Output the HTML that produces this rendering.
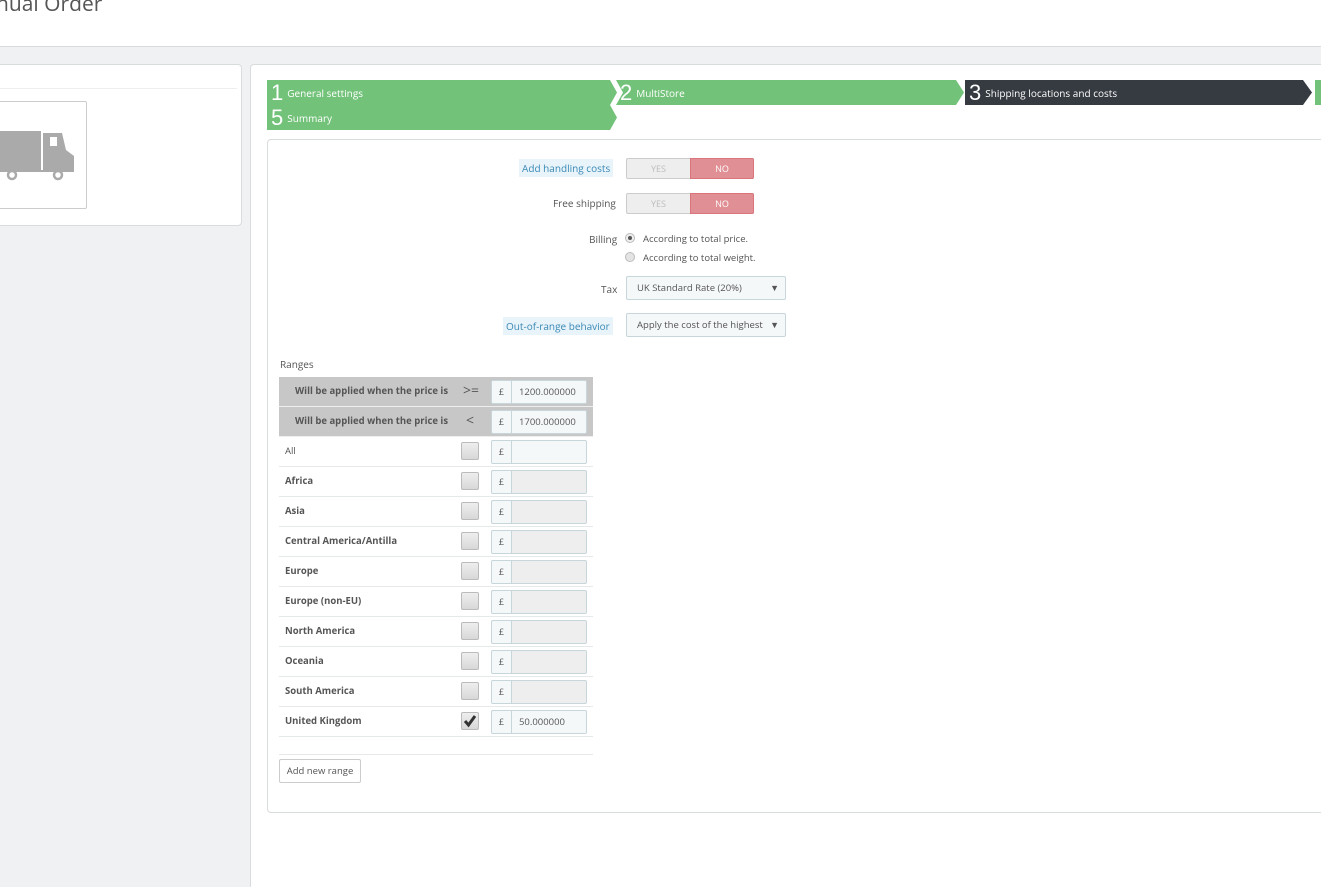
<!DOCTYPE html>
<html style="width:1321px;height:887px;overflow:hidden"><head><meta charset="utf-8"><style>
*{box-sizing:border-box;margin:0;padding:0}
body{width:1321px;height:887px;overflow:hidden;background:#eff1f2;font-family:"Open Sans","Liberation Sans",sans-serif;position:relative;font-size:10px;color:#555}
.a{position:absolute}
.step{position:absolute;height:25px;color:#fff;font-size:10px;line-height:26px;white-space:nowrap}
.step b{font-weight:normal;font-size:22px;vertical-align:-3px;margin:0 4px 0 4px;font-family:"Liberation Sans",sans-serif}
.lbl{position:absolute;font-size:10px;color:#555;text-align:right}
.sw{position:absolute;width:128px;height:21px;border:1px solid #ccc;border-radius:2px;background:#eee}
.sw .y{position:absolute;left:0;width:63px;top:0;height:19px;color:#bbb;text-align:center;line-height:19px;font-size:9px}
.sw .n{position:absolute;left:63px;top:-1px;width:64px;height:21px;background:#e08f95;border:1px solid #d9747b;color:#fff;text-align:center;line-height:19px;font-size:9px;border-radius:0 2px 2px 0}
.sel{position:absolute;left:626px;width:160px;height:24px;border:1px solid #c7d6db;background:#f5f8f9;border-radius:2px;font-size:9.5px;line-height:22px;padding-left:10px;color:#555}
.sel:after{content:"▼";position:absolute;right:6px;top:0;font-size:9px}
.row{position:absolute;left:279px;width:314px;height:30px;border-bottom:1px solid #e6e9ea;font-size:9.5px}
.row .t{position:absolute;left:6px;top:7px;font-weight:bold;color:#555}
.cb{position:absolute;left:182px;top:5px;width:18px;height:18px;border:1px solid #bbb;border-radius:2px;background:linear-gradient(#eee,#d8d8d8)}
.cur{position:absolute;left:212px;top:3px;width:21px;height:24px;border:1px solid #c7d6db;background:#f5f8f9;text-align:center;line-height:22px;font-size:9px;border-radius:2px 0 0 2px}
.inp{position:absolute;left:232px;top:3px;width:76px;height:24px;border:1px solid #c7d6db;background:#eee;border-radius:0 2px 2px 0;line-height:22px;padding-left:7px;font-size:9.5px}
.hr{background:#c7c7c7;border-bottom:1px solid #eee}
.hr .t{left:16px;color:#555}
.hr .op{position:absolute;left:184px;top:4px;font-size:14px;color:#555}
.hr .inp{background:#f5f8f9}
</style></head><body>
<div class="a" style="left:0;top:0;width:1321px;height:47px;background:#fff;border-bottom:1px solid #d9dcdd"></div>
<div class="a" style="left:-4px;top:-10px;font-size:21px;color:#555">nual Order</div>

<div class="a" style="left:-5px;top:64px;width:247px;height:162px;background:#fff;border:1px solid #d9dcdd;border-radius:4px"></div>
<div class="a" style="left:0;top:88px;width:237px;height:1px;background:#eee"></div>
<div class="a" style="left:-5px;top:101px;width:92px;height:108px;background:#fff;border:1px solid #ccc;border-radius:2px"></div>
<svg class="a" style="left:0;top:125px" width="80" height="60" viewBox="0 125 80 60">
<rect x="0" y="131" width="41" height="39" fill="#aaa"/>
<path d="M43 133 H62 L66 150 L74 156 V170 H43 Z" fill="#aaa"/>
<rect x="50" y="137" width="7" height="9" fill="#fff"/>
<rect x="0" y="170" width="74" height="2" fill="#aaa"/>
<circle cx="12" cy="175" r="4" fill="#fff" stroke="#aaa" stroke-width="2.5"/>
<circle cx="58" cy="175" r="4" fill="#fff" stroke="#aaa" stroke-width="2.5"/>
</svg>

<div class="a" style="left:250px;top:64px;width:1071px;height:823px;background:#fff;border-left:1px solid #d9dcdd;border-top:1px solid #d9dcdd;border-radius:4px 0 0 0"></div>

<svg class="a" style="left:267px;top:80px" width="1054" height="51">
<polygon points="0,0 343,0 350,12.5 343,25 350,37.5 343,50 0,50" fill="#72c279"/>
<polygon points="349,0 689,0 697,12.5 689,25 349,25 356,12.5" fill="#72c279"/>
<polygon points="698,0 1036,0 1045,12.5 1036,25 698,25" fill="#363a41"/>
<polygon points="1048,0 1054,0 1054,25 1048,25" fill="#72c279"/>
</svg>
<div class="step" style="left:267px;top:80px"><b>1</b>General settings</div>
<div class="step" style="left:267px;top:105px"><b>5</b>Summary</div>
<div class="step" style="left:616px;top:80px"><b>2</b>MultiStore</div>
<div class="step" style="left:965px;top:80px"><b>3</b>Shipping locations and costs</div>

<div class="a" style="left:267px;top:139px;width:1070px;height:674px;border:1px solid #d9dcdd;border-radius:4px"></div>

<div class="lbl" style="left:519px;top:159px;background:#e8f3fa;color:#3a89b5;padding:2px 3px">Add handling costs</div>
<div class="sw" style="left:626px;top:158px"><div class="y">YES</div><div class="n">NO</div></div>
<div class="lbl" style="left:553px;top:196px">Free shipping</div>
<div class="sw" style="left:626px;top:193px"><div class="y">YES</div><div class="n">NO</div></div>
<div class="lbl" style="left:589px;top:232px">Billing</div>
<div class="a" style="left:625px;top:233px;width:10px;height:10px;border-radius:50%;border:1px solid #bbb;background:#eee"><div style="margin:2px;width:4px;height:4px;border-radius:50%;background:#555"></div></div>
<div class="a" style="left:643px;top:232px;font-size:9.5px">According to total price.</div>
<div class="a" style="left:625px;top:252px;width:10px;height:10px;border-radius:50%;border:1px solid #bbb;background:#e4e4e4"></div>
<div class="a" style="left:643px;top:251px;font-size:9.5px">According to total weight.</div>
<div class="lbl" style="left:601px;top:282px">Tax</div>
<div class="sel" style="top:276px">UK Standard Rate (20%)</div>
<div class="lbl" style="left:503px;top:317px;background:#e8f3fa;color:#3a89b5;padding:2px 3px">Out-of-range behavior</div>
<div class="sel" style="top:313px;overflow:hidden;white-space:nowrap;padding-right:20px">Apply the cost of the highest</div>

<div class="a" style="left:280px;top:357px;font-size:10px">Ranges</div>
<div class="row hr" style="top:377px"><div class="t">Will be applied when the price is</div><div class="op">&gt;=</div><div class="cur">£</div><div class="inp">1200.000000</div></div>
<div class="row hr" style="top:407px"><div class="t">Will be applied when the price is</div><div class="op" style="left:187px">&lt;</div><div class="cur">£</div><div class="inp">1700.000000</div></div>
<div class="row" style="top:437px"><div class="t" style="font-weight:normal">All</div><div class="cb"></div><div class="cur">£</div><div class="inp" style="background:#f5f8f9"></div></div>
<div class="row" style="top:467px"><div class="t">Africa</div><div class="cb"></div><div class="cur">£</div><div class="inp"></div></div>
<div class="row" style="top:497px"><div class="t">Asia</div><div class="cb"></div><div class="cur">£</div><div class="inp"></div></div>
<div class="row" style="top:527px"><div class="t">Central America/Antilla</div><div class="cb"></div><div class="cur">£</div><div class="inp"></div></div>
<div class="row" style="top:557px"><div class="t">Europe</div><div class="cb"></div><div class="cur">£</div><div class="inp"></div></div>
<div class="row" style="top:587px"><div class="t">Europe (non-EU)</div><div class="cb"></div><div class="cur">£</div><div class="inp"></div></div>
<div class="row" style="top:617px"><div class="t">North America</div><div class="cb"></div><div class="cur">£</div><div class="inp"></div></div>
<div class="row" style="top:647px"><div class="t">Oceania</div><div class="cb"></div><div class="cur">£</div><div class="inp"></div></div>
<div class="row" style="top:677px"><div class="t">South America</div><div class="cb"></div><div class="cur">£</div><div class="inp"></div></div>
<div class="row" style="top:707px"><div class="t">United Kingdom</div><div class="cb"><svg width="16" height="16" viewBox="0 0 16 16"><path d="M3 8 L6.5 12 L13 3" fill="none" stroke="#333" stroke-width="3"/></svg></div><div class="cur">£</div><div class="inp" style="background:#f5f8f9">50.000000</div></div>
<div class="a" style="left:279px;top:754px;width:314px;height:1px;background:#e6e9ea"></div>
<div class="a" style="left:279px;top:759px;width:82px;height:24px;border:1px solid #ccc;border-radius:2px;background:#fff;font-size:9.5px;line-height:22px;text-align:center">Add new range</div>
</body></html>
